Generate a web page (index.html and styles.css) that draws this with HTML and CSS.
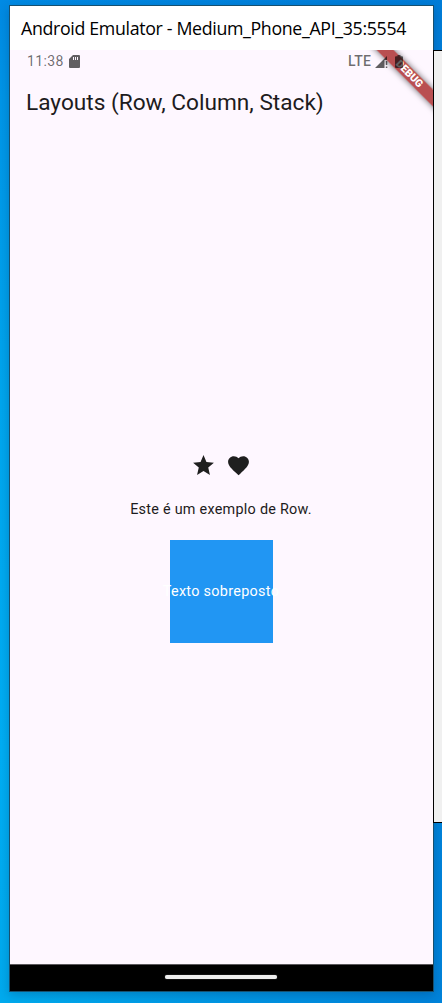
FILE: index.html
```html
<!DOCTYPE html>
<html lang="pt">
<head>
<meta charset="utf-8">
<title>Android Emulator</title>
<link rel="stylesheet" href="styles.css">
</head>
<body>
<div class="desktop">
  <main class="window">
    <header class="titlebar"><span class="window-title">Android Emulator - Medium_Phone_API_35:5554</span></header>
    <section class="screen">
      <div class="status">
        <span class="clock">11:38</span>
        <svg class="sd" viewBox="0 0 11 13"><path fill-rule="evenodd" d="M4 0h6q1 0 1 1v11q0 1-1 1H1q-1 0-1-1V4zM4 2v3h1V2zM6 2v3h1V2zM8 2v3h1V2z"/></svg>
        <span class="network">LTE</span>
        <svg class="signal" viewBox="0 0 14 13"><path d="M0 13L12 1v4H9.500v8zM10.800 6h1.500v4h-1.500zM10.800 11.500h1.500V13h-1.500z"/></svg>
        <svg class="battery" viewBox="0 0 8 13"><path d="M2.500 0h3v1.200H7q1 0 1 1V12q0 1-1 1H1q-1 0-1-1V2.200q0-1 1-1h1.500z"/></svg>
      </div>
      <h1 class="appbar"><span class="app-title">Layouts (Row, Column, Stack)</span></h1>
      <div class="content">
        <div class="icons">
          <svg class="icon" viewBox="0 0 24 24"><path d="M12 17.270L18.180 21l-1.640-7.030L22 9.240l-7.190-.61L12 2 9.190 8.630 2 9.240l5.460 4.730L5.820 21z"/></svg>
          <svg class="icon" viewBox="0 0 24 24"><path d="M12 21.350l-1.450-1.320C5.400 15.360 2 12.280 2 8.500 2 5.420 4.420 3 7.500 3c1.740 0 3.410.81 4.500 2.090C13.090 3.810 14.760 3 16.500 3 19.580 3 22 5.420 22 8.500c0 3.780-3.400 6.860-8.550 11.540z"/></svg>
        </div>
        <p class="caption">Este é um exemplo de Row.</p>
        <div class="box"><span class="box-text">Texto sobreposto</span></div>
      </div>
      <div class="debug"><span class="debug-text">DEBUG</span></div>
    </section>
    <footer class="navbar"><div class="handle"></div></footer>
  </main>
  <div class="side-panel"></div>
</div>
</body>
</html>
```
FILE: styles.css
```css
body { margin: 0; }
.desktop {
  position: relative;
  box-sizing: border-box;
  width: 442px;
  height: 1003px;
  padding: 5px 0 0 9px;
  overflow: hidden;
  background:
    linear-gradient(90deg, transparent 20px, rgba(0, 122, 214, .8) 430px),
    linear-gradient(#008ae4 0, #0096e8 100px, #00a6ee 400px, #00aef4 750px, #00aaee 1003px);
  font-family: Roboto, sans-serif;
}
.side-panel {
  position: absolute;
  left: 433px;
  top: 50px;
  width: 20px;
  height: 771px;
  border: 1px solid #000;
  background: #f0f0f0;
}
.window {
  position: relative;
  display: flex;
  flex-direction: column;
  box-sizing: border-box;
  width: 425px;
  height: 987px;
  border: 1px solid #17506f;
  box-shadow: 0 3px 10px rgba(0, 30, 70, .25);
}
.titlebar {
  display: flex;
  align-items: center;
  height: 44px;
  padding-left: 11px;
  background: #fff;
  color: #000;
}
.window-title {
  font: 17.800px/24px "Open Sans", sans-serif;
  letter-spacing: -.34px;
  white-space: nowrap;
}
.screen {
  position: relative;
  display: flex;
  flex-direction: column;
  height: 914px;
  overflow: hidden;
  background: #fef7ff;
  color: #1d1b20;
}
.status {
  position: relative;
  z-index: 1;
  display: flex;
  align-items: center;
  height: 22px;
  padding: 0 30px 0 17px;
  color: rgba(0, 0, 0, .58);
  fill: rgba(0, 0, 0, .62);
}
.clock { width: 42px; font-size: 14px; letter-spacing: .4px; }
.sd { width: 11px; height: 13px; }
.network { margin-left: auto; font-size: 14px; font-weight: 500; letter-spacing: .2px; }
.signal { width: 14px; height: 13px; margin-left: 4px; }
.battery { width: 8px; height: 13px; margin-left: 6px; }
.appbar { margin: 0; padding: 16px 16px 0; font-weight: 400; }
.app-title { display: block; font-size: 22.650px; line-height: 30px; white-space: nowrap; }
.content {
  display: flex;
  flex-direction: column;
  align-items: center;
  margin-top: 335px;
}
.icons { display: flex; gap: 10px; padding-right: 2px; }
.icon { width: 25px; height: 25px; fill: #1f1f1f; }
.caption { margin: 21px 1px 0 0; font-size: 14.400px; line-height: 21px; letter-spacing: .26px; white-space: nowrap; }
.box {
  display: flex;
  align-items: center;
  justify-content: center;
  width: 103px;
  height: 103px;
  margin: 20px 1px 0 0;
  background: #2196f3;
}
.box-text { color: #fff; font-size: 14.400px; letter-spacing: .3px; white-space: nowrap; }
.debug {
  position: absolute;
  left: 348.500px;
  top: 18.300px;
  width: 100px;
  height: 12.400px;
  background: rgba(160, 20, 20, .74);
  box-shadow: 0 0 6px rgba(0, 0, 0, .6);
  transform: rotate(45deg);
  text-align: center;
}
.debug-text { display: block; color: #fff; font-size: 10.500px; line-height: 12.400px; font-weight: 900; }
.navbar {
  display: flex;
  align-items: center;
  justify-content: center;
  box-sizing: border-box;
  height: 27px;
  padding: 0 1px 2px 0;
  border-top: 1px solid #5b585c;
  background: #000;
}
.handle { width: 112px; height: 4px; border-radius: 2px; background: #eee; box-shadow: 0 0 1px #aaa; }
```
